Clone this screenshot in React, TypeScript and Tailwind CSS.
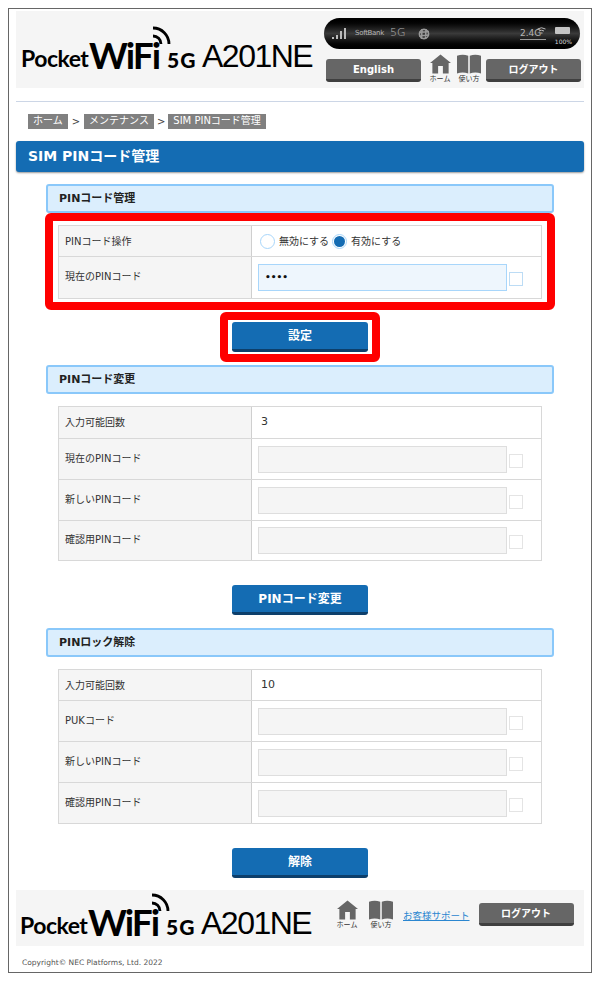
import React from "react";

const font = { fontFamily: '"DejaVu Sans","Noto Sans CJK JP",sans-serif' };

function Logo({ className = "" }: { className?: string }) {
  return (
    <div className={"relative w-[296px] h-[30px] flex items-end text-black whitespace-nowrap shrink-0 " + className} style={{ fontFamily: 'Lato,"Noto Sans",sans-serif' }}>
      <span className="w-[68px] shrink-0 text-[23px] leading-[24px] font-bold tracking-[-0.5px] relative top-[1px]">Pocket</span>
      <span className="w-[78px] shrink-0 text-[37px] leading-[34px] font-bold tracking-[-2px] relative top-[3px]">WiFi</span>
      <span className="w-[35px] shrink-0 text-[21px] leading-[20px] font-black tracking-[1px] relative top-[1px]">5G</span>
      <span className="shrink-0 text-[32px] leading-[30px] tracking-[-1.5px] relative top-[2px]" style={{ fontFamily: '"Liberation Sans",sans-serif' }}>A201NE</span>
      <svg className="absolute left-[129px] top-[-14px]" width="22" height="22" viewBox="0 0 22 22" fill="none" stroke="#000" strokeWidth="2.8">
        <path d="M3 11 A8 8 0 0 1 11 19" />
        <path d="M3 3 A16 16 0 0 1 19 19" />
      </svg>
    </div>
  );
}

function GrayButton({ label, className = "" }: { label: string; className?: string }) {
  return (
    <div className={"h-[23px] rounded-[3px] bg-[#666666] border-b-[3px] border-[#3f3f3f] text-white text-[10px] font-bold flex items-center justify-center " + className}>
      {label}
    </div>
  );
}

function HomeIcon({ label = "ホーム" }: { label?: string }) {
  return (
    <div className="w-[26px] flex flex-col items-center">
      <svg width="21" height="20" viewBox="0 0 22 20" fill="#666666">
        <path d="M11 0 L22 9 L19.5 9 L19.5 20 L13.5 20 L13.5 12 L8.5 12 L8.5 20 L2.5 20 L2.5 9 L0 9 Z" />
      </svg>
      <span className="text-[7px] leading-[9px] text-[#333] whitespace-nowrap mt-[1px]">{label}</span>
    </div>
  );
}

function BookIcon() {
  return (
    <div className="w-[26px] flex flex-col items-center">
      <svg width="24" height="20" viewBox="0 0 25 20" fill="#666666">
        <path d="M0 1.5 Q6 -1 11.7 1.5 L11.7 20 Q6 17.5 0 20 Z" />
        <path d="M13.3 1.5 Q19 -1 25 1.5 L25 20 Q19 17.5 13.3 20 Z" />
      </svg>
      <span className="text-[7px] leading-[9px] text-[#333] whitespace-nowrap mt-[1px]">使い方</span>
    </div>
  );
}

function StatusBar() {
  return (
    <div className="relative h-[31px] w-[256px] rounded-[16px] bg-gradient-to-b from-[#000000] via-[#3a3a3a] to-[#000000] ml-[7px] text-[#b5b5b5] flex items-center">
      <svg className="ml-[8px]" width="16" height="13" viewBox="0 0 16 13" fill="#bbb">
        <rect x="0" y="10" width="2" height="2" />
        <rect x="4" y="8" width="2" height="4" />
        <rect x="8" y="4" width="2" height="8" />
        <rect x="12" y="1" width="2" height="11" />
      </svg>
      <span className="ml-[7px] w-[28px] text-[7px] tracking-[-0.3px]">SoftBank</span>
      <span className="ml-[7px] text-[11px] font-light">5G</span>
      <svg className="ml-[12px]" width="12" height="12" viewBox="0 0 12 12" fill="none" stroke="#999" strokeWidth="1.6">
        <circle cx="6" cy="6" r="4.6" />
        <path d="M4 1 L3.5 11 M8 1 L7.5 11 M1 4.5 L11 3.5 M1 8 L11 7" />
      </svg>
      <div className="ml-auto mr-[4px] relative w-[56px] h-full">
        <span className="absolute left-0 top-[9px] text-[9px] leading-[12px] border-b border-[#999] w-[26px] whitespace-nowrap">2.4G</span>
        <svg className="absolute left-[17px] top-[9px]" width="9" height="8" viewBox="0 0 9 8" fill="none" stroke="#bbb" strokeWidth="1">
          <path d="M0.5 2 Q4.5 -0.5 8.5 2 M2 4 Q4.5 2.5 7 4 M3.5 6 L5.5 6" />
        </svg>
        <div className="absolute right-[6px] top-[9px] w-[15px] h-[7px] bg-[#c4c4c4] rounded-[1px]" />
        <span className="absolute right-[4px] top-[20px] text-[6px] leading-[8px] text-[#d8d8d8]">100%</span>
      </div>
    </div>
  );
}

function SectionHead({ label }: { label: string }) {
  return (
    <div className="h-[29px] mx-[30px] rounded-[3px] bg-[#dbeefd] border-2 border-[#8ac8fa] flex items-center pl-[11px] pt-[1px] text-[11px] font-bold text-[#222]">
      {label}
    </div>
  );
}

function BlueButton({ label }: { label: string }) {
  return (
    <div className="w-[136px] h-[30px] mx-auto rounded-[3px] bg-[#146cb3] border-b-[3px] border-[#0d3f6b] text-white text-[12px] font-bold flex items-center justify-center">
      {label}
    </div>
  );
}

function Row({ label, h, last, top, children }: { label: string; h: string; last?: boolean; top?: boolean; children: React.ReactNode }) {
  return (
    <div className={"flex " + h + (last ? "" : " border-b border-[#d8d8d8]")}>
      <div className={"w-[193px] shrink-0 bg-[#f5f5f5] border-r border-[#cfcfcf] pl-[6px] flex items-center text-[10px] text-[#333] " + (top ? "" : "pb-[2px]")}>{label}</div>
      <div className="flex-1 flex items-center pl-[6px] text-[10px] text-[#333]">{children}</div>
    </div>
  );
}

function Field({ active, value }: { active?: boolean; value?: string }) {
  return (
    <>
      <div className={"w-[249px] h-[27px] border flex items-center pl-[6px] text-[#111] text-[9px] font-bold " + (active ? "bg-[#eef6fd] border-[#a8d6fb]" : "bg-[#f5f5f5] border-[#dedede]")}>
        {value}
      </div>
      <div className={"ml-[2px] mt-[3px] w-[14px] h-[14px] border " + (active ? "border-[#bcdcf5]" : "border-[#e4e4e4]")} />
    </>
  );
}

function Table({ children }: { children: React.ReactNode }) {
  return <div className="mx-[42px] w-[484px] border border-[#d8d8d8]">{children}</div>;
}

export default function App() {
  return (
    <div className="w-[600px] h-[981px] bg-white pt-[8px] pl-[8px]" style={font}>
      <div className="w-[584px] h-[965px] border border-[#666666] px-[7px] pt-[2px]">
        <div className="h-[77px] bg-[#f5f5f5] flex justify-between">
          <Logo className="mt-[28px] ml-[5px]" />
          <div className="w-[268px] pt-[7px] pr-[2px] shrink-0">
            <StatusBar />
            <div className="flex items-start mt-[5px] ml-[9px]">
              <GrayButton label="English" className="w-[95px] mt-[5px]" />
              <div className="ml-[6px]"><HomeIcon /></div>
              <div className="ml-[3px]"><BookIcon /></div>
              <GrayButton label="ログアウト" className="w-[95px] ml-[4px] mt-[5px]" />
            </div>
          </div>
        </div>

        <div className="mt-[13px] h-[1px] bg-[#ccd6e6]" />

        <div className="mt-[12px] ml-[12px] h-[15px] flex items-center text-[10px] text-[#444]">
          <span className="h-[15px] px-[5px] bg-[#808080] text-white leading-[14px]">ホーム</span>
          <span className="mx-[4px]">&gt;</span>
          <span className="h-[15px] px-[5px] bg-[#808080] text-white leading-[14px]">メンテナンス</span>
          <span className="mx-[3px]">&gt;</span>
          <span className="h-[15px] px-[5px] bg-[#808080] text-white leading-[14px]">SIM PINコード管理</span>
        </div>

        <div className="mt-[12px] h-[31px] rounded-[3px] bg-[#146cb3] shadow-[0_1px_2px_#999] flex items-center pl-[12px] text-white text-[14px] font-bold">
          SIM PINコード管理
        </div>

        <div className="mt-[12px]">
          <SectionHead label="PINコード管理" />
          <div className="relative mt-[12px]">
            <Table>
              <Row label="PINコード操作" h="h-[31px]" top>
                <div className="w-[15px] h-[15px] rounded-full border border-[#a8d6fb] bg-white ml-[2px]" />
                <span className="ml-[4px]">無効にする</span>
                <div className="ml-[3px] w-[15px] h-[15px] rounded-full border border-[#a8d6fb] bg-white flex items-center justify-center">
                  <div className="w-[11px] h-[11px] rounded-full bg-[#146cb3]" />
                </div>
                <span className="ml-[4px]">有効にする</span>
              </Row>
              <Row label="現在のPINコード" h="h-[41px]" last>
                <Field active value="••••" />
              </Row>
            </Table>
            <div className="absolute left-[29px] right-[29px] top-[-12px] h-[97px] rounded-[6px] border-[8px] border-[#ff0000]" />
          </div>
          <div className="relative mt-[23px]">
            <BlueButton label="設定" />
            <div className="absolute left-[204px] top-[-10px] w-[160px] h-[50px] rounded-[6px] border-[8px] border-[#ff0000]" />
          </div>
        </div>

        <div className="mt-[13px]">
          <SectionHead label="PINコード変更" />
          <div className="mt-[12px]">
            <Table>
              <Row label="入力可能回数" h="h-[32px]" top><span className="ml-[3px] text-[11px]">3</span></Row>
              <Row label="現在のPINコード" h="h-[41px]"><Field /></Row>
              <Row label="新しいPINコード" h="h-[41px]"><Field /></Row>
              <Row label="確認用PINコード" h="h-[39px]" last><Field /></Row>
            </Table>
          </div>
          <div className="mt-[24px]"><BlueButton label="PINコード変更" /></div>
        </div>

        <div className="mt-[13px]">
          <SectionHead label="PINロック解除" />
          <div className="mt-[12px]">
            <Table>
              <Row label="入力可能回数" h="h-[31px]" top><span className="ml-[3px] text-[11px]">10</span></Row>
              <Row label="PUKコード" h="h-[41px]"><Field /></Row>
              <Row label="新しいPINコード" h="h-[41px]"><Field /></Row>
              <Row label="確認用PINコード" h="h-[40px]" last><Field /></Row>
            </Table>
          </div>
          <div className="mt-[24px]"><BlueButton label="解除" /></div>
        </div>

        <div className="mt-[12px] h-[56px] bg-[#f5f5f5] flex">
          <Logo className="mt-[16px] ml-[4px]" />
          <div className="ml-[18px] mt-[10px] flex items-start">
            <HomeIcon />
            <div className="ml-[8px]"><BookIcon /></div>
            <a className="ml-[9px] mt-[9px] text-[9.5px] text-[#2a86d0] underline whitespace-nowrap">お客様サポート</a>
            <GrayButton label="ログアウト" className="w-[95px] ml-[9px] mt-[3px]" />
          </div>
        </div>

        <div className="mt-[12px] ml-[6px] text-[7.5px] leading-[10px] text-[#555]">Copyright© NEC Platforms, Ltd. 2022</div>
      </div>
    </div>
  );
}
